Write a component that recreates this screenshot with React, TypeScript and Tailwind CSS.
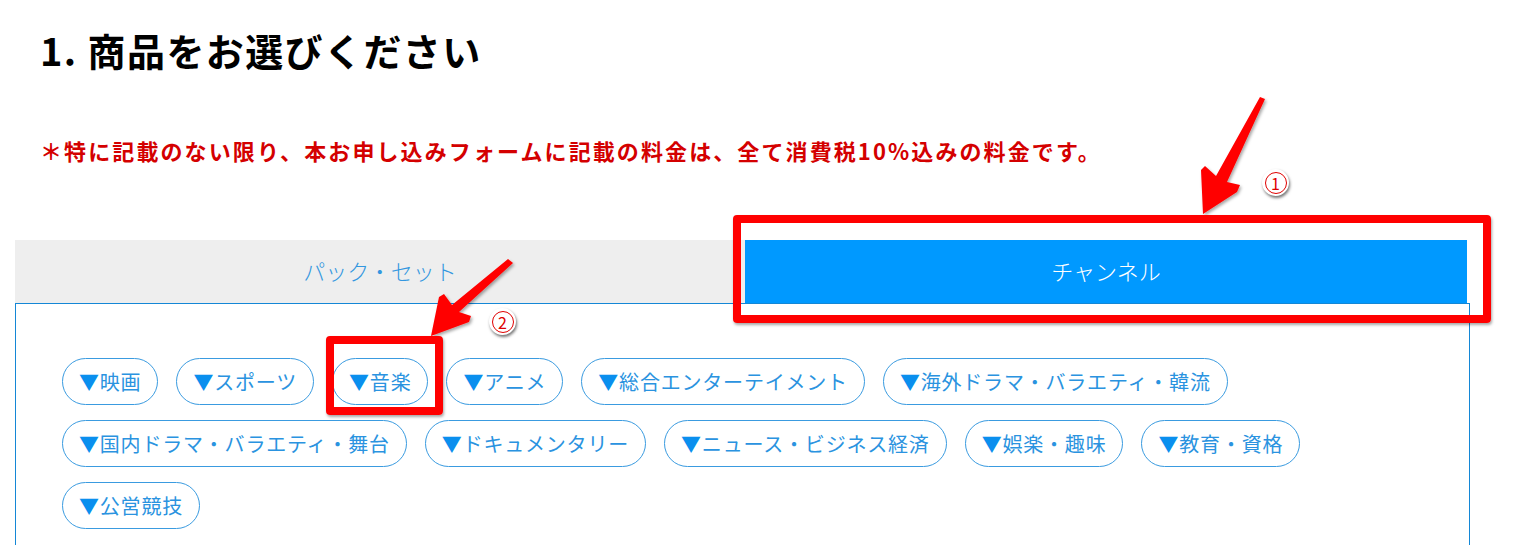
import React from 'react';

const genres: string[] = [
  '映画',
  'スポーツ',
  '音楽',
  'アニメ',
  '総合エンターテイメント',
  '海外ドラマ・バラエティ・韓流',
  '国内ドラマ・バラエティ・舞台',
  'ドキュメンタリー',
  'ニュース・ビジネス経済',
  '娯楽・趣味',
  '教育・資格',
  '公営競技',
];

const GenrePill: React.FC<{ label: string }> = ({ label }) => (
  <button className="h-[47px] rounded-full border border-[#3a9be0] bg-white px-[16px] text-[20px] leading-none tracking-[0.8px] text-[#2a93e0] whitespace-nowrap">
    <span className="text-[#0a8fee]">▼</span>
    {label}
  </button>
);

const NumberBadge: React.FC<{ n: string; className: string }> = ({ n, className }) => (
  <div
    className={`pointer-events-none absolute flex h-[27px] w-[27px] items-center justify-center rounded-full bg-white shadow-[1px_2px_3px_rgba(0,0,0,0.55)] ${className}`}
  >
    <div className="flex h-[22px] w-[22px] items-center justify-center rounded-full border-[1.5px] border-[#e00000] text-[16px] leading-none text-[#e00000]">
      {n}
    </div>
  </div>
);

// Annotation marks drawn over the form (arrows, numbered badges, red frames)
const Annotations: React.FC = () => (
  <>
    <svg
      className="pointer-events-none absolute left-0 top-0"
      width={1529}
      height={545}
      viewBox="0 0 1529 545"
    >
      <defs>
        <filter id="arrowShadow" x="-20%" y="-20%" width="140%" height="140%">
          <feDropShadow dx="1.5" dy="2" stdDeviation="1.5" floodColor="#000" floodOpacity="0.35" />
        </filter>
      </defs>
      <path
        d="M1260 97 L1265 99 L1227 182 L1240 185 L1237 192 L1203 214 L1201 170 L1205 166 L1216 176 Z"
        fill="#ff0000"
        strokeLinejoin="round"
        filter="url(#arrowShadow)"
      />
      <path
        d="M508 259 L513 263 L459 312 L471 316 L469 322 L431 336 L439 297 L444 294 L452 305 Z"
        fill="#ff0000"
        strokeLinejoin="round"
        filter="url(#arrowShadow)"
      />
    </svg>

    <div className="pointer-events-none absolute left-[733px] top-[215px] h-[108px] w-[758px] rounded-[4px] border-[8px] border-[#ff0000] shadow-[1px_2px_3px_rgba(0,0,0,0.35)]" />
    <div className="pointer-events-none absolute left-[326px] top-[336px] h-[79px] w-[117px] rounded-[4px] border-[8px] border-[#ff0000] shadow-[1px_2px_3px_rgba(0,0,0,0.35)]" />

    <NumberBadge n="1" className="left-[1262px] top-[169px]" />
    <NumberBadge n="2" className="left-[489px] top-[308px]" />
  </>
);

export default function App() {
  return (
    <div
      className="relative h-[545px] w-[1529px] overflow-hidden bg-white"
      style={{ fontFamily: '"Noto Sans CJK JP", "Noto Sans", sans-serif' }}
    >
      <div className="pl-[40px] pt-[28px]">
        <h1 className="text-[38px] font-bold leading-[44px] tracking-[1.4px] text-black">1. 商品をお選びください</h1>
        <p className="mt-[64px] text-[22px] font-bold leading-[28px] tracking-[2.1px] text-[#d40000]">
          ＊特に記載のない限り、本お申し込みフォームに記載の料金は、全て消費税10%込みの料金です。
        </p>
      </div>

      <div className="ml-[15px] mt-[76px] w-[1455px]">
        <div className="flex h-[63px]">
          <div className="flex w-[730px] items-center justify-center bg-[#eeeeee] pb-[3px] text-[22px] font-light text-[#3397e0]">
            パック・セット
          </div>
          <div className="flex w-[722px] items-center justify-center bg-[#0099ff] pb-[3px] text-[22px] font-light text-white">
            チャンネル
          </div>
        </div>
        <div className="border border-solid border-[#1487d6] pb-[40px] pl-[46px] pr-[46px] pt-[54px]">
          <div className="flex flex-wrap gap-x-[18px] gap-y-[15px]">
            {genres.map((g) => (
              <GenrePill key={g} label={g} />
            ))}
          </div>
        </div>
      </div>

      <Annotations />
    </div>
  );
}
